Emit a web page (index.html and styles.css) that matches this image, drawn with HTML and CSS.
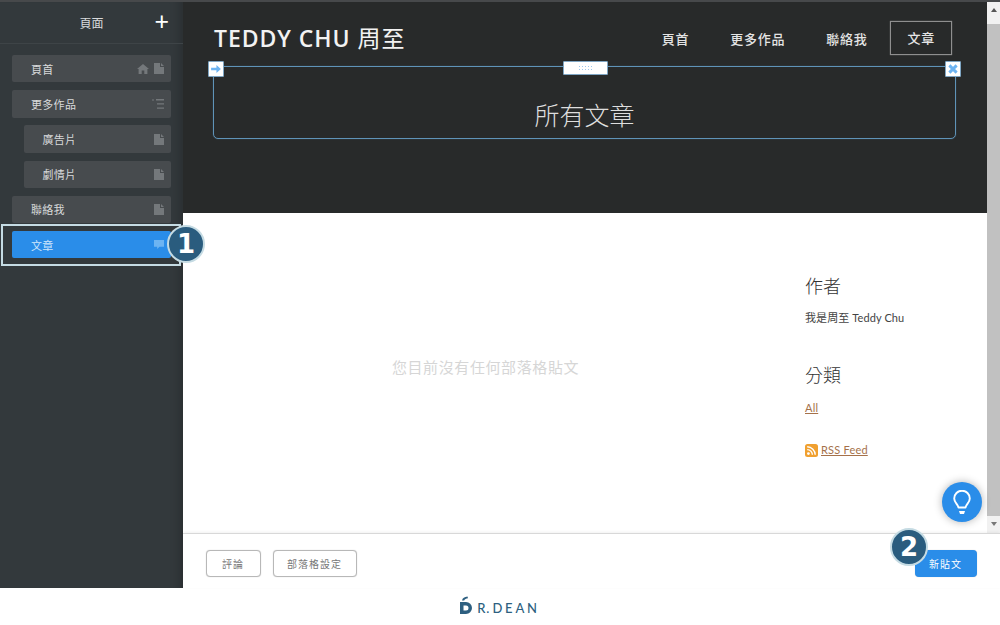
FILE: index.html
```html
<!DOCTYPE html>
<html lang="zh-Hant">
<head>
    <meta charset="UTF-8">
    <title>頁面</title>
    <link rel="stylesheet" href="styles.css">
</head>
<body>
    <svg class="defs" width="0" height="0">
        <symbol id="page" viewBox="0 0 10 11"><path d="M0 0H6V4H10V11H0Z M7 0L10 3H7Z" fill="currentColor"/></symbol>
        <symbol id="home" viewBox="0 0 12 10"><path d="M6 0L12 5H10.4V10H7.3V6.5H4.7V10H1.6V5H0Z" fill="currentColor"/></symbol>
        <symbol id="list" viewBox="0 0 12 10"><path d="M0 .5H2V1.500H0Z M4 0H12V1.400H4Z M5 4.200H12V5.600H5Z M5 8.400H12V9.800H5Z" fill="currentColor"/></symbol>
        <symbol id="chat" viewBox="0 0 11 10"><path d="M0 0H11V7.500H6L3.500 10V7.500H0Z" fill="currentColor"/></symbol>
    </svg>

    <div class="topline"></div>
    <div class="editor">
        <aside class="sidebar">
            <div class="sidebar-head">
                <span>頁面</span>
                <span class="plus">+</span>
            </div>
            <nav class="tree">
                <div class="tree-item"><span>頁首</span><span class="tree-icons"><svg class="ico-wide"><use href="#home"/></svg><svg class="ico"><use href="#page"/></svg></span></div>
                <div class="tree-item"><span>更多作品</span><span class="tree-icons"><svg class="ico-wide"><use href="#list"/></svg></span></div>
                <div class="tree-item sub"><span>廣告片</span><span class="tree-icons"><svg class="ico"><use href="#page"/></svg></span></div>
                <div class="tree-item sub"><span>劇情片</span><span class="tree-icons"><svg class="ico"><use href="#page"/></svg></span></div>
                <div class="tree-item"><span>聯絡我</span><span class="tree-icons"><svg class="ico"><use href="#page"/></svg></span></div>
                <div class="tree-item selected"><span>文章</span><span class="tree-icons"><svg class="ico"><use href="#chat"/></svg></span></div>
            </nav>
        </aside>

        <main class="workspace">
            <div class="preview">
                <div class="site">
                    <header class="site-header">
                        <div class="site-bar">
                            <div class="site-name">TEDDY CHU <span>周至</span></div>
                            <nav class="site-nav">
                                <a>頁首</a>
                                <a>更多作品</a>
                                <a>聯絡我</a>
                                <a class="active">文章</a>
                            </nav>
                        </div>
                        <div class="title-band">
                            <span class="handle handle-left">
                                <svg width="10" height="8" viewBox="0 0 11 9"><path d="M0 3H6V0L11 4.500 6 9V6H0Z" fill="#6db4f2"/></svg>
                            </span>
                            <span class="handle handle-mid"><i></i></span>
                            <span class="handle handle-right">
                                <svg width="10" height="10" viewBox="0 0 11 11"><path d="M1.500 1.500L9.500 9.500M9.500 1.500L1.500 9.500" stroke="#6db4f2" stroke-width="3.200"/></svg>
                            </span>
                            <h1>所有文章</h1>
                        </div>
                    </header>
                    <section class="site-body">
                        <div class="posts">您目前沒有任何部落格貼文</div>
                        <div class="blog-side">
                            <h3>作者</h3>
                            <p>我是周至 Teddy Chu</p>
                            <h3 class="second">分類</h3>
                            <a class="link all">All</a>
                            <div class="rss">
                                <svg width="13" height="13" viewBox="0 0 13 13"><rect width="13" height="13" rx="2.500" fill="#f0a030"/><circle cx="3.400" cy="9.600" r="1.400" fill="#fff"/><path d="M2.200 5.600A5.200 5.200 0 0 1 7.400 10.800M2.200 2.800A8 8 0 0 1 10.200 10.800" fill="none" stroke="#fff" stroke-width="1.400"/></svg>
                                <a class="link">RSS Feed</a>
                            </div>
                        </div>
                    </section>
                </div>
                <div class="scrollbar">
                    <span class="arrow up"></span>
                    <span class="thumb"></span>
                    <span class="arrow down"></span>
                </div>
                <button class="tips">
                    <svg width="18" height="25" viewBox="0 0 18 25"><path d="M5.500 17.500C5 14.500 1.200 12.500 1.200 8.500A7.800 7.800 0 0 1 16.800 8.500C16.800 12.500 13 14.500 12.500 17.500Z" fill="none" stroke="#fff" stroke-width="1.900" stroke-linejoin="round"/><path d="M6 21H12L11 24H7Z" fill="#fff"/></svg>
                </button>
            </div>
            <footer class="toolbar">
                <div class="toolbar-left">
                    <button class="btn comments">評論</button>
                    <button class="btn settings">部落格設定</button>
                </div>
                <button class="btn primary">新貼文</button>
            </footer>
        </main>
    </div>
    <div class="brand">
        <svg width="12" height="18" viewBox="0 0 12 18"><path d="M2 4.500C2.500 2 4.500 .8 7.500 .5L8 2.300C6 2.500 4.800 3.200 4.200 4.500Z" fill="#2d5f80"/><path d="M0 6H6A6 6 0 0 1 6 18H0Z M3.500 9.500V14.500H6A2.500 2.500 0 0 0 6 9.500Z" fill="#2d5f80" fill-rule="evenodd"/></svg>
        <span class="brand-r">R.</span><span>DEAN</span>
    </div>

    <!-- tutorial marks -->
    <div class="mark-box"></div>
    <div class="badge badge-one">1</div>
    <div class="badge badge-two">2</div>
</body>
</html>
```

FILE: styles.css
```css
body {
    margin: 0;
    position: relative;
    height: 625px;
    overflow: hidden;
    background-color: #fff;
    font-family: "Lato", "Noto Sans CJK TC", sans-serif;
}

.defs {
    position: absolute;
}

.topline {
    height: 2px;
    background-color: #47494b;
}

.editor {
    display: flex;
    height: 586px;
}

/* Sidebar */
.sidebar {
    width: 183px;
    flex-shrink: 0;
    background-color: #33393c;
    box-shadow: inset -12px 0 10px -8px rgba(0, 0, 0, 0.18);
    color: #d8dadb;
}

.sidebar-head {
    display: flex;
    justify-content: flex-end;
    align-items: center;
    gap: 51px;
    height: 41px;
    padding-right: 14px;
    border-bottom: 1px solid #3e4447;
    font-size: 12px;
}

.plus {
    margin-top: -5px;
    font-size: 25px;
    font-weight: 400;
    color: #fff;
    line-height: 1;
}

.tree {
    display: flex;
    flex-direction: column;
    gap: 7.800px;
    padding: 11px 12px 0;
}

.tree-item {
    display: flex;
    justify-content: space-between;
    align-items: center;
    height: 27.400px;
    padding: 0 7px 0 19px;
    border-radius: 2px;
    background-color: #474b4e;
    font-size: 11px;
    letter-spacing: .3px;
}

.tree-item.sub {
    margin-left: 11.500px;
}

.tree-item.selected {
    background-color: #2a8de9;
    color: #cfe6fb;
}

.tree-icons {
    display: flex;
    align-items: center;
    gap: 5px;
    color: #74787b;
}

.selected .tree-icons {
    color: #6db4f2;
}

.ico {
    width: 10px;
    height: 11px;
}

.ico-wide {
    width: 12px;
    height: 10px;
}

/* Preview */
.workspace {
    flex: 1;
    display: flex;
    flex-direction: column;
}

.preview {
    position: relative;
    display: flex;
    height: 531px;
}

.site {
    flex: 1;
}

.site-header {
    height: 211px;
    padding: 19px 31px 0 30px;
    box-sizing: border-box;
    background-color: #282a2a;
}

.site-bar {
    display: flex;
    justify-content: space-between;
    align-items: center;
    height: 34px;
    margin-right: 4px;
    margin-bottom: 11px;
}

.site-name {
    margin-top: -2px;
    padding-left: 1px;
    font-family: "Open Sans", "Noto Sans CJK TC", sans-serif;
    font-size: 23px;
    font-weight: 600;
    letter-spacing: .95px;
    color: #f2f2f2;
}

.site-name span {
    font-weight: 400;
}

.site-nav {
    display: flex;
    align-items: center;
    gap: 41px;
    font-size: 13px;
    font-weight: 500;
    letter-spacing: .75px;
    color: #e4e4e4;
}

.site-nav .active {
    margin-left: -18px;
    padding: 0 16px;
    line-height: 32px;
    border: 1px solid #8f8f8f;
    box-shadow: 0 0 1px rgba(200, 200, 200, 0.6);
}

.title-band {
    position: relative;
    display: flex;
    justify-content: center;
    align-items: center;
    height: 73px;
    box-sizing: border-box;
    border: 1px solid #5f93b8;
    border-radius: 0 0 5px 5px;
    box-shadow: 0 0 1px rgba(95, 147, 184, 0.8);
}

.title-band h1 {
    margin: 22px 0 0;
    font-size: 25px;
    font-weight: 300;
    color: #dedede;
}

.handle {
    position: absolute;
    display: flex;
    justify-content: center;
    align-items: center;
    box-sizing: border-box;
    border: 1px solid #7fa6c4;
    border-radius: 1px;
    background-color: #fff;
}

.handle-left,
.handle-right {
    top: -6px;
    width: 16px;
    height: 16px;
}

.handle-left {
    left: -6px;
}

.handle-right {
    right: -6px;
}

.handle-mid {
    top: -6px;
    left: 349px;
    width: 45px;
    height: 14px;
}

.handle-mid i {
    width: 15px;
    height: 6px;
    background-image: radial-gradient(#9cc8ee 1px, transparent 1px);
    background-size: 3px 3px;
}

.site-body {
    display: flex;
    height: 320px;
    background-color: #fff;
}

.posts {
    width: 605px;
    padding-top: 143px;
    box-sizing: border-box;
    text-align: center;
    font-size: 15px;
    letter-spacing: .6px;
    color: #d6d6d6;
}

.blog-side {
    padding: 60px 0 0 17px;
    font-size: 11px;
    letter-spacing: .1px;
    color: #444;
}

.blog-side h3 {
    margin: 0 0 11px;
    font-size: 18px;
    font-weight: 300;
    line-height: 26px;
    color: #333;
}

.blog-side p {
    margin: 0;
    line-height: 16px;
}

.blog-side h3.second {
    margin-top: 36px;
    margin-bottom: 12px;
}

.link {
    font-size: 11px;
    letter-spacing: .2px;
    line-height: 16px;
    color: #a5714a;
    text-decoration: underline;
}

.all {
    display: block;
}

.rss {
    display: flex;
    align-items: center;
    gap: 3px;
    margin-top: 26px;
}

.scrollbar {
    display: flex;
    flex-direction: column;
    align-items: stretch;
    width: 13px;
    flex-shrink: 0;
    background-color: #f1f1f1;
}

.thumb {
    flex: 1;
    margin: 5px 0 0;
    background-color: #c1c1c1;
}

.arrow {
    position: relative;
    height: 17px;
}

.arrow::after {
    content: "";
    position: absolute;
    left: 3.500px;
    top: 6px;
    border-left: 3px solid transparent;
    border-right: 3px solid transparent;
}

.up::after {
    border-bottom: 4px solid #555;
}

.down::after {
    border-top: 4px solid #777;
}

.tips {
    position: absolute;
    right: 18px;
    bottom: 11px;
    display: flex;
    justify-content: center;
    align-items: center;
    width: 40px;
    height: 40px;
    padding: 0;
    border: none;
    border-radius: 50%;
    background-color: #2a8de9;
    box-shadow: 0 0 8px rgba(0, 0, 0, 0.3);
}

/* Bottom bar */
.toolbar {
    position: relative;
    display: flex;
    justify-content: space-between;
    align-items: flex-start;
    flex: 1;
    padding: 16px 23px 0;
    border-top: 1px solid #d8d8d8;
    background-color: #fff;
    box-shadow: 0 -1px 3px rgba(0, 0, 0, 0.06);
}

.toolbar-left {
    display: flex;
    gap: 12px;
}

.btn {
    height: 27px;
    padding: 0 1px 0 0;
    border: 1px solid #b8b8b8;
    border-radius: 4px;
    background-color: #fff;
    box-shadow: 0 0 1px rgba(0, 0, 0, 0.25);
    font-family: "Lato", "Noto Sans CJK TC", sans-serif;
    font-size: 10px;
    letter-spacing: 1px;
    color: #777;
}

.comments {
    width: 55px;
}

.settings {
    width: 84px;
}

.primary {
    width: 62px;
    border: none;
    background-color: #2a8de9;
    color: #fff;
}

/* Logo under the editor */
.brand {
    display: flex;
    justify-content: center;
    align-items: flex-end;
    height: 33px;
    box-sizing: border-box;
    padding: 0 0 6px;
    font-size: 13px;
    font-weight: 500;
    letter-spacing: 2.800px;
    line-height: 14px;
    color: #2d5f80;
}

.brand svg {
    margin-right: 5px;
    margin-bottom: 1px;
}

.brand-r {
    margin-right: 2px;
    letter-spacing: 1px;
}

/* Tutorial marks */
.mark-box {
    position: absolute;
    left: 1px;
    top: 224px;
    width: 180px;
    height: 42px;
    box-sizing: border-box;
    border: 2px solid #c5dbe3;
}

.badge {
    position: absolute;
    width: 38px;
    height: 38px;
    box-sizing: border-box;
    border: 2px solid #c5dbe3;
    border-radius: 50%;
    background-color: #2a5c7e;
    color: #fff;
    font-family: "DejaVu Sans", sans-serif;
    font-size: 26px;
    font-weight: 700;
    line-height: 35px;
    text-align: center;
}

.badge-one {
    left: 167px;
    top: 225px;
}

.badge-two {
    left: 890px;
    top: 528px;
}
```
